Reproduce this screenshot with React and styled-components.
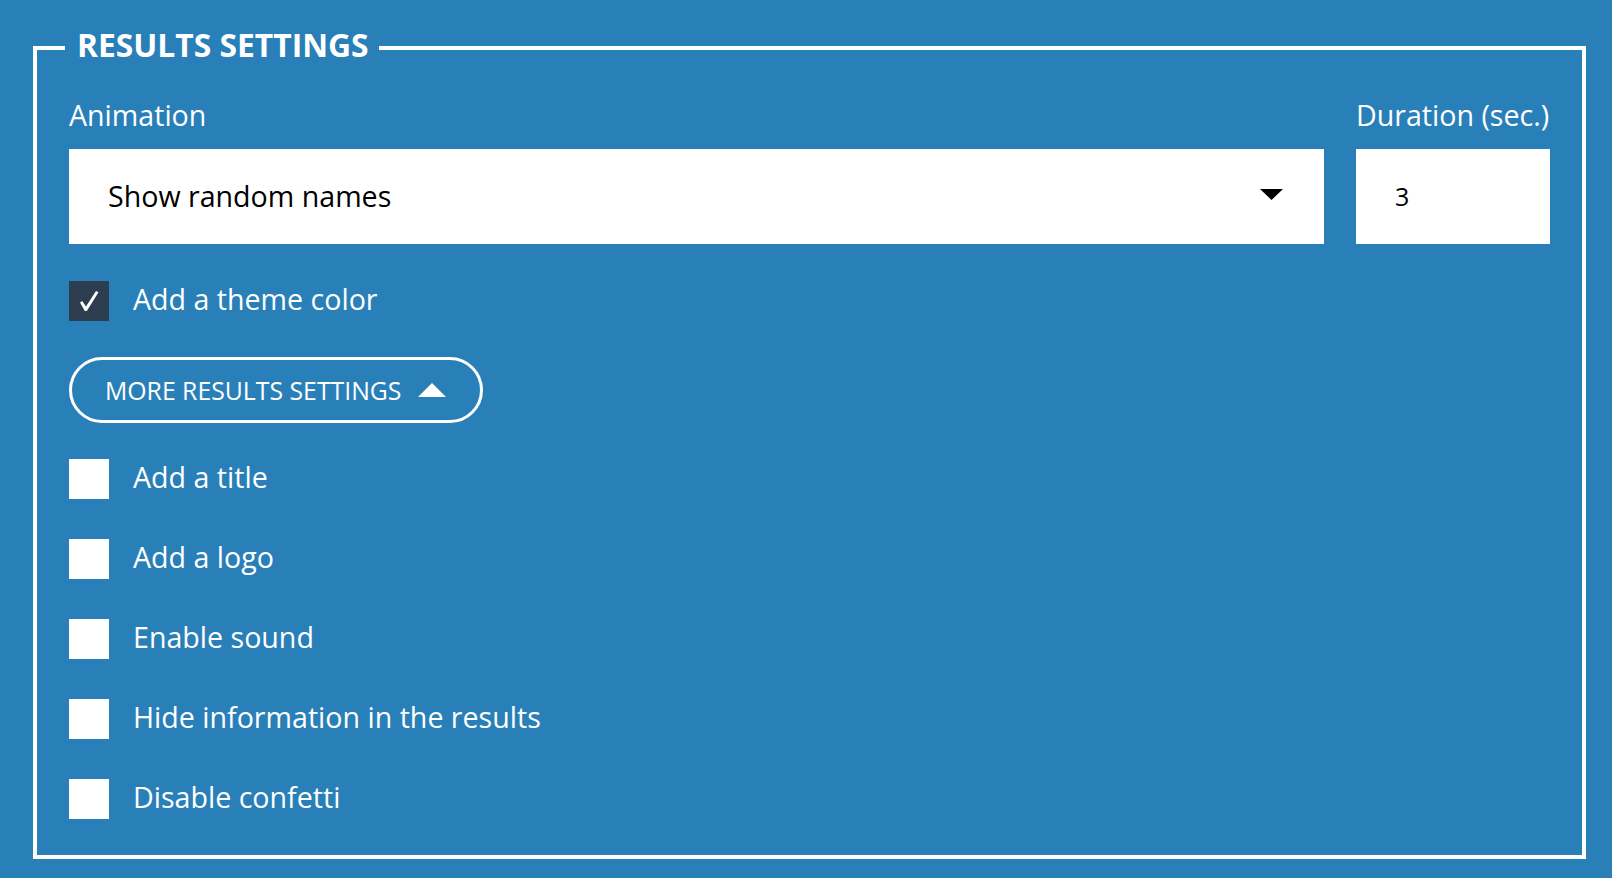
import React from 'react'
import styled, { createGlobalStyle } from "styled-components";

const options = [
  { label: "Add a title", checked: false },
  { label: "Add a logo", checked: false },
  { label: "Enable sound", checked: false },
  { label: "Hide information in the results", checked: false },
  { label: "Disable confetti", checked: false },
];

const CheckItem = ({ label, checked }) => (
  <CheckRow>
    <Box $checked={checked}>
      {checked && (
        <svg width="22" height="22" viewBox="0 0 22 22">
          <path d="M2 12.5 L4.2 11 L8 16.5 L18 1 L20.5 2.2 L8.8 21 L6.8 21 Z" fill="#fff" />
        </svg>
      )}
    </Box>
    <span>{label}</span>
  </CheckRow>
);

const App = () => {
  return (
    <Page>
      <GlobalStyle />
      <Fieldset>
        <Legend>RESULTS SETTINGS</Legend>
        <Content>
          <FieldGrid>
            <Field>
              <Label>Animation</Label>
              <Select>
                <span>Show random names</span>
                <svg width="23" height="11" viewBox="0 0 23 11">
                  <path d="M0 0 H23 L11.5 11 Z" fill="#000" />
                </svg>
              </Select>
            </Field>
            <Field>
              <Label>Duration (sec.)</Label>
              <NumberInput type="text" defaultValue="3" />
            </Field>
          </FieldGrid>

          <CheckItem label="Add a theme color" checked />

          <MoreButton type="button">
            More results settings
            <svg width="28" height="14" viewBox="0 0 28 14">
              <path d="M0 14 L14 0 L28 14 Z" fill="#fff" />
            </svg>
          </MoreButton>

          <OptionList>
            {options.map((item, index) => (
              <CheckItem key={index} label={item.label} checked={item.checked} />
            ))}
          </OptionList>
        </Content>
      </Fieldset>
    </Page>
  )
}

export default App;

const GlobalStyle = createGlobalStyle`
body{
  margin:0;
  background:#2980b9;
  font-family:"Open Sans", "Noto Sans", sans-serif;
}
`

const Page = styled.div`
padding:23px 26px 19px 33px;
`

const Fieldset = styled.fieldset`
margin:0;
padding:0;
min-width:0;
border:4px solid #fff;
`

const Legend = styled.legend`
margin-left:28px;
padding:0 10px 6px 12px;
font-size:31.8px;
font-weight:700;
line-height:44px;
color:#fff;
`

const Content = styled.div`
display:flex;
flex-direction:column;
row-gap:36px;
padding:23px 32px 36px;
`

const FieldGrid = styled.div`
display:grid;
grid-template-columns:1fr 194px;
column-gap:32px;
margin-bottom:1px;
`

const Field = styled.div`
display:flex;
flex-direction:column;
`

const Label = styled.label`
font-size:28.6px;
line-height:38px;
color:#fff;
margin-bottom:15px;
white-space:nowrap;
`

const Select = styled.div`
box-sizing:border-box;
height:95px;
background:#fff;
display:flex;
align-items:center;
justify-content:space-between;
padding:0 41px 3px 39px;
font-size:28.6px;
color:#000;

svg{
  margin-top:3px;
  margin-bottom:5px;
}
`

const NumberInput = styled.input`
box-sizing:border-box;
width:100%;
height:95px;
border:0;
outline:none;
padding:0 39px 2px;
font-family:"Open Sans", "Noto Sans", sans-serif;
font-size:25px;
color:#000;
background:#fff;
`

const CheckRow = styled.div`
display:flex;
align-items:flex-start;
column-gap:24px;
font-size:28.6px;
line-height:36px;
color:#fff;
`

const Box = styled.span`
flex:none;
width:40px;
height:40px;
background:${props => props.$checked ? "#2c3e50" : "#fff"};
display:flex;
align-items:center;
justify-content:center;
`

const MoreButton = styled.button`
align-self:flex-start;
height:66px;
display:inline-flex;
align-items:center;
column-gap:17px;
padding:0 34px 0 33px;
border:3px solid #fff;
border-radius:33px;
background:transparent;
color:#fff;
font-family:"Open Sans", "Noto Sans", sans-serif;
font-size:24.8px;
text-transform:uppercase;
cursor:pointer;
`

const OptionList = styled.div`
display:flex;
flex-direction:column;
row-gap:40px;
`
